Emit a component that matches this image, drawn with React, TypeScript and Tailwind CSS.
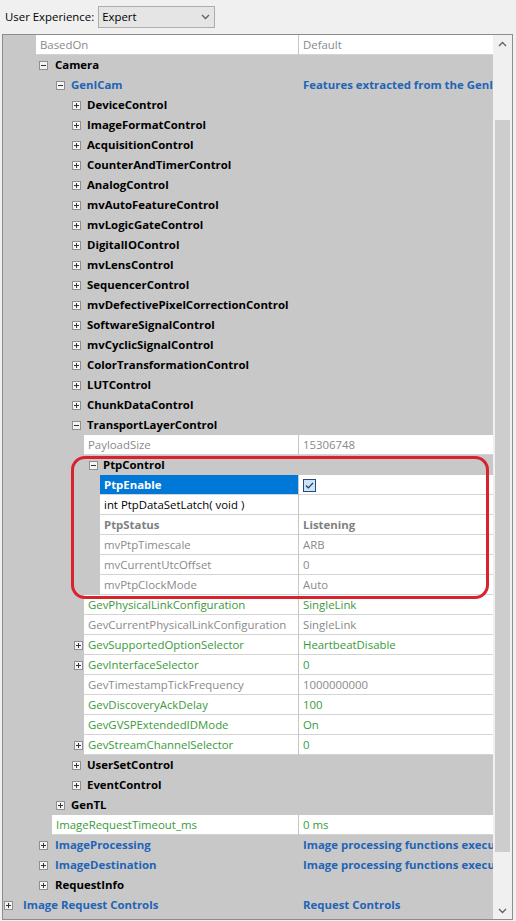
import React from "react";

type Tone = "black" | "blue" | "green" | "gray" | "grayBold";

type Row =
  | { kind: "cat"; level: number; name: string; open?: boolean; tone?: Tone; value?: string }
  | {
      kind: "prop";
      level: number;
      name: string;
      value?: string;
      tone: Tone;
      expandable?: boolean;
      selected?: boolean;
      check?: boolean;
    };

const rows: Row[] = [
  { kind: "prop", level: 1, name: "BasedOn", value: "Default", tone: "gray" },
  { kind: "cat", level: 1, name: "Camera", open: true },
  { kind: "cat", level: 2, name: "GenICam", open: true, tone: "blue", value: "Features extracted from the GenICam XML file" },
  { kind: "cat", level: 3, name: "DeviceControl" },
  { kind: "cat", level: 3, name: "ImageFormatControl" },
  { kind: "cat", level: 3, name: "AcquisitionControl" },
  { kind: "cat", level: 3, name: "CounterAndTimerControl" },
  { kind: "cat", level: 3, name: "AnalogControl" },
  { kind: "cat", level: 3, name: "mvAutoFeatureControl" },
  { kind: "cat", level: 3, name: "mvLogicGateControl" },
  { kind: "cat", level: 3, name: "DigitalIOControl" },
  { kind: "cat", level: 3, name: "mvLensControl" },
  { kind: "cat", level: 3, name: "SequencerControl" },
  { kind: "cat", level: 3, name: "mvDefectivePixelCorrectionControl" },
  { kind: "cat", level: 3, name: "SoftwareSignalControl" },
  { kind: "cat", level: 3, name: "mvCyclicSignalControl" },
  { kind: "cat", level: 3, name: "ColorTransformationControl" },
  { kind: "cat", level: 3, name: "LUTControl" },
  { kind: "cat", level: 3, name: "ChunkDataControl" },
  { kind: "cat", level: 3, name: "TransportLayerControl", open: true },
  { kind: "prop", level: 4, name: "PayloadSize", value: "15306748", tone: "gray" },
  { kind: "cat", level: 4, name: "PtpControl", open: true },
  { kind: "prop", level: 5, name: "PtpEnable", tone: "black", selected: true, check: true },
  { kind: "prop", level: 5, name: "int PtpDataSetLatch( void )", value: "", tone: "black" },
  { kind: "prop", level: 5, name: "PtpStatus", value: "Listening", tone: "grayBold" },
  { kind: "prop", level: 5, name: "mvPtpTimescale", value: "ARB", tone: "gray" },
  { kind: "prop", level: 5, name: "mvCurrentUtcOffset", value: "0", tone: "gray" },
  { kind: "prop", level: 5, name: "mvPtpClockMode", value: "Auto", tone: "gray" },
  { kind: "prop", level: 4, name: "GevPhysicalLinkConfiguration", value: "SingleLink", tone: "green" },
  { kind: "prop", level: 4, name: "GevCurrentPhysicalLinkConfiguration", value: "SingleLink", tone: "gray" },
  { kind: "prop", level: 4, name: "GevSupportedOptionSelector", value: "HeartbeatDisable", tone: "green", expandable: true },
  { kind: "prop", level: 4, name: "GevInterfaceSelector", value: "0", tone: "green", expandable: true },
  { kind: "prop", level: 4, name: "GevTimestampTickFrequency", value: "1000000000", tone: "gray" },
  { kind: "prop", level: 4, name: "GevDiscoveryAckDelay", value: "100", tone: "green" },
  { kind: "prop", level: 4, name: "GevGVSPExtendedIDMode", value: "On", tone: "green" },
  { kind: "prop", level: 4, name: "GevStreamChannelSelector", value: "0", tone: "green", expandable: true },
  { kind: "cat", level: 3, name: "UserSetControl" },
  { kind: "cat", level: 3, name: "EventControl" },
  { kind: "cat", level: 2, name: "GenTL" },
  { kind: "prop", level: 2, name: "ImageRequestTimeout_ms", value: "0 ms", tone: "green" },
  { kind: "cat", level: 1, name: "ImageProcessing", tone: "blue", value: "Image processing functions executed on the host" },
  { kind: "cat", level: 1, name: "ImageDestination", tone: "blue", value: "Image processing functions executed on the host" },
  { kind: "cat", level: 1, name: "RequestInfo" },
  { kind: "cat", level: 0, name: "Image Request Controls", tone: "blue", value: "Request Controls" },
];

const toneClass: Record<Tone, string> = {
  black: "text-black",
  blue: "text-[#1f64b6] font-bold",
  green: "text-[#3a9a3a]",
  gray: "text-[#8a8a8a]",
  grayBold: "text-[#808080] font-bold",
};

// indentation of category rows (box offset, gap box -> label)
const catPad: Record<number, string> = {
  0: "pl-[1px]",
  1: "pl-[36px]",
  2: "pl-[53px]",
  3: "pl-[69px]",
  4: "pl-[86px]",
};
const catGap: Record<number, string> = {
  0: "ml-[10px]",
  1: "ml-[7px]",
  2: "ml-[6px]",
  3: "ml-[6px]",
  4: "ml-[5px]",
};
// gray gutter in front of a property cell
const propGutter: Record<number, string> = {
  1: "w-[33px]",
  2: "w-[49px]",
  4: "w-[81px]",
  5: "w-[97px]",
};

const Expander = ({ open }: { open?: boolean }) => (
  <svg width="9" height="9" viewBox="0 0 9 9" className="shrink-0">
    <rect x="0.5" y="0.5" width="8" height="8" fill="#f4f4f4" stroke="#8f8f8f" />
    <path d="M2 4.5h5" stroke="#333" />
    {!open && <path d="M4.5 2v5" stroke="#333" />}
  </svg>
);

const CheckBox = () => (
  <svg width="13" height="13" viewBox="0 0 13 13">
    <rect x="0.5" y="0.5" width="12" height="12" fill="#cce4f7" stroke="#24497a" />
    <path d="M3 6.5l2.3 2.3L10 4" fill="none" stroke="#1c3b66" strokeWidth="1.2" />
  </svg>
);

const CatRow = ({ row }: { row: Extract<Row, { kind: "cat" }> }) => (
  <div className="flex h-5 bg-[#c8c8c8]">
    <div className={`flex w-[295px] shrink-0 items-center overflow-hidden ${catPad[row.level]}`}>
      <Expander open={row.open} />
      <span className={`${catGap[row.level]} whitespace-nowrap font-bold ${toneClass[row.tone ?? "black"]}`}>
        {row.name}
      </span>
    </div>
    <div className="w-px shrink-0" />
    <div className={`w-[194px] overflow-hidden whitespace-nowrap pl-1 leading-5 font-bold ${toneClass[row.tone ?? "black"]}`}>
      {row.value}
    </div>
  </div>
);

const PropRow = ({ row }: { row: Extract<Row, { kind: "prop" }> }) => (
  <div className="flex h-5">
    <div className={`flex shrink-0 items-center bg-[#c8c8c8] ${propGutter[row.level]}`}>
      {row.expandable && (
        <div className="pl-[71px]">
          <Expander />
        </div>
      )}
    </div>
    <div
      className={`min-w-0 flex-1 overflow-hidden whitespace-nowrap border-b border-[#d4d4d4] pl-1 pt-px leading-[18px] ${
        row.selected ? "bg-[#0078d7] font-bold text-white" : `bg-white ${toneClass[row.tone]}`
      }`}
    >
      {row.name}
    </div>
    <div className="w-px shrink-0 bg-[#c6c6c6]" />
    <div
      className={`flex w-[194px] items-center overflow-hidden whitespace-nowrap border-b border-[#d4d4d4] bg-white pl-1 pt-px ${toneClass[row.tone]}`}
    >
      {row.check ? <CheckBox /> : row.value}
    </div>
  </div>
);

const Chevron = ({ up }: { up?: boolean }) => (
  <svg width="9" height="6" viewBox="0 0 9 6">
    <path d={up ? "M1 5l3.5-3.5L8 5" : "M1 1l3.5 3.5L8 1"} fill="none" stroke="#606060" strokeWidth="1.3" />
  </svg>
);

export default function App() {
  return (
    <div className="relative h-[921px] w-[516px] overflow-hidden bg-[#f0f0f0] text-[11.4px] font-['Open_Sans',sans-serif] text-black">
      {/* toolbar */}
      <div className="flex h-[34px] items-center pl-[5px]">
        <span>User Experience:</span>
        <div className="ml-[4px] flex h-[22px] w-[117px] items-center justify-between border border-[#adadad] bg-[#e5e5e5] pl-[3px] pr-[4px]">
          <span>Expert</span>
          <Chevron />
        </div>
      </div>

      {/* property grid */}
      <div className="ml-[2px] flex h-[886px] w-[511px] border border-[#8c8c8c]">
        <div className="flex h-full w-[490px] flex-col bg-[#c8c8c8]">
          {rows.map((row, i) =>
            row.kind === "cat" ? <CatRow key={i} row={row} /> : <PropRow key={i} row={row} />
          )}
        </div>
        <div className="flex flex-1 flex-col bg-[#f0f0f0]">
          <div className="flex h-[17px] items-center justify-center">
            <Chevron up />
          </div>
          <div className="h-[68px]" />
          <div className="mx-[2px] h-[732px] bg-[#cdcdcd]" />
          <div className="flex-1" />
          <div className="flex h-[17px] items-center justify-center">
            <Chevron />
          </div>
        </div>
      </div>

      {/* red annotation */}
      <div className="pointer-events-none absolute left-[71px] top-[456px] h-[143px] w-[418px] rounded-[14px] border-[3px] border-[#d8232f]" />
    </div>
  );
}
